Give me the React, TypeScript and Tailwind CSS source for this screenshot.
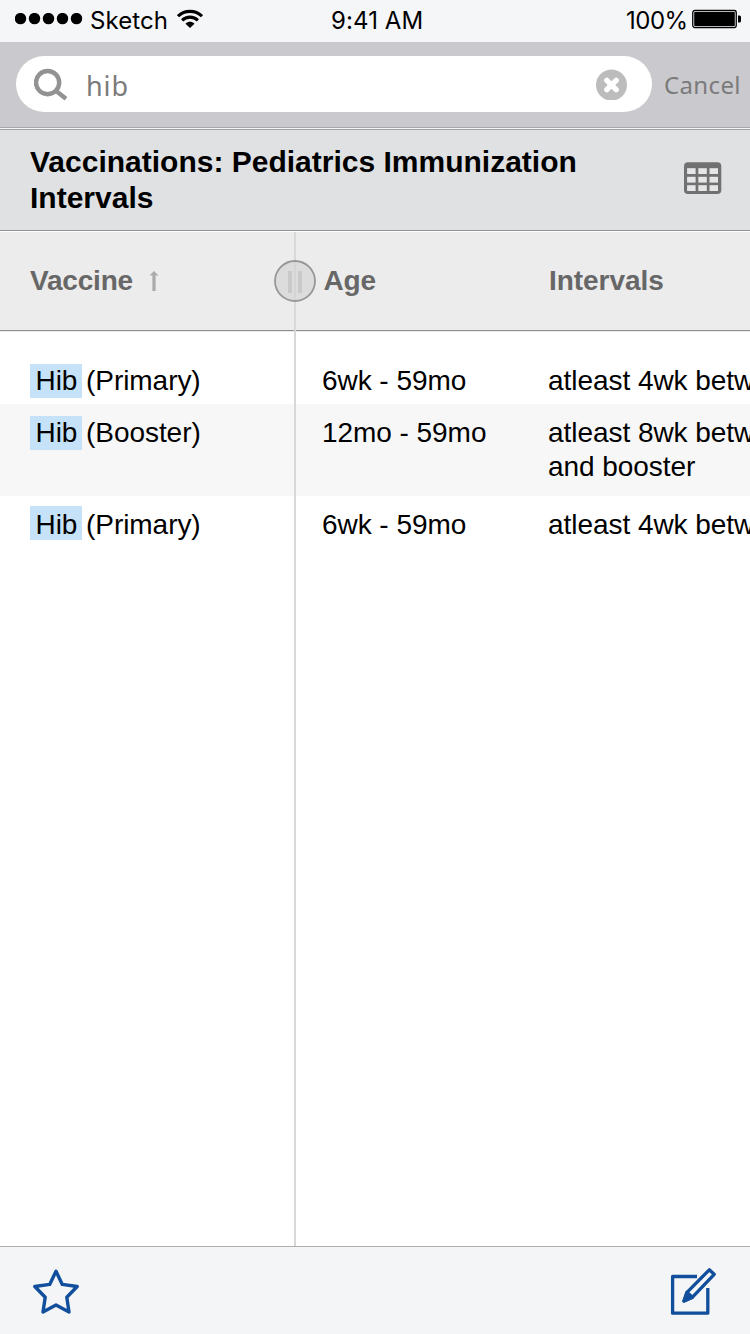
import React from "react";

const rows = [
  { kind: "(Primary)", age: "6wk - 59mo", intervals: ["atleast 4wk between"], style: "h-[72px] pt-8", markStyle: "" },
  { kind: "(Booster)", age: "12mo - 59mo", intervals: ["atleast 8wk between", "and booster"], style: "h-[92px] pt-3 bg-[#f7f7f7]", markStyle: "" },
  { kind: "(Primary)", age: "6wk - 59mo", intervals: ["atleast 4wk between"], style: "h-[56px] pt-3", markStyle: "-mt-0.5 pt-0.5" },
];

function StatusBar() {
  return (
    <div className="flex h-[42px] shrink-0 items-center bg-[#f5f6f8] font-['Inter',sans-serif] text-[24px] leading-[42px] text-black">
      <svg className="ml-[15px] h-3 w-[68px] -translate-y-[2px]" viewBox="0 0 68 12">
        {[5.5, 19.5, 33.5, 47.5, 61.5].map((x) => (
          <circle key={x} cx={x} cy="5.6" r="5.7" />
        ))}
      </svg>
      <span className="ml-[7px] w-[80px] whitespace-nowrap tracking-[0.1px]">Sketch</span>
      <svg className="ml-[7px] h-[20px] w-[26px] -translate-y-[2px]" viewBox="0 0 26 20" fill="none" stroke="#000" strokeWidth="3.1">
        <path d="M1 7.2C7.6 .8 18.4 .8 25 7.2" />
        <path d="M5.1 11.3C9.5 7.1 16.5 7.1 20.9 11.3" />
        <path d="M8.5 14.7C11.2 12.2 14.8 12.2 17.5 14.7L13 19Z" fill="#000" stroke="none" />
      </svg>
      <span className="ml-[128px] w-[110px] whitespace-nowrap tracking-[0.1px]">9:41 AM</span>
      <span className="ml-[185px] w-[61px] whitespace-nowrap tracking-[-0.5px]">100%</span>
      <svg className="ml-[5px] h-[19px] w-[50px] -translate-y-[2.5px]" viewBox="0 0 50 19">
        <rect x=".75" y=".75" width="43.5" height="17.5" rx="2.5" fill="none" stroke="#000" strokeWidth="1.3" />
        <rect x="2.2" y="2.2" width="40.6" height="14.6" rx="1" />
        <path d="M46 6h1.5q1.5 0 1.5 1.5v4q0 1.5-1.5 1.5H46z" />
      </svg>
    </div>
  );
}

function SearchBar() {
  return (
    <div className="flex h-[85px] shrink-0 items-start bg-[#cac9ce] pt-[14px] pl-4 font-['Noto_Sans',sans-serif] text-[#7b7b7b]">
      <div className="flex h-14 w-[636px] items-center rounded-full bg-white">
        <svg className="ml-[18px] h-[34px] w-[34px]" viewBox="0 0 34 34" fill="none" stroke="#929292" strokeWidth="4.4">
          <circle cx="13.6" cy="15.6" r="11.6" />
          <path d="M21.5 23.5L32 31.7" />
        </svg>
        <span className="ml-[18px] w-[80px] pt-[3px] text-[27px] leading-[56px] tracking-[0.9px]">hib</span>
        <svg className="ml-[430px] h-8 w-8 shrink-0" viewBox="0 0 32 32">
          <circle cx="15.5" cy="17" r="15.5" fill="#bcbcbc" />
          <path d="M10.8 12.3L20.2 21.7M20.2 12.3L10.8 21.7" stroke="#fff" strokeWidth="5.4" strokeLinecap="round" />
        </svg>
      </div>
      <span className="ml-3 whitespace-nowrap pt-px text-[24px] leading-[56px] tracking-[0.35px]">Cancel</span>
    </div>
  );
}

function TitleBar() {
  return (
    <div className="flex h-[101px] shrink-0 items-start justify-between border-b border-[#8f9093] bg-[#e0e1e3] pt-[14px] pr-[28px] pl-[30px]">
      <h1 className="w-[600px] whitespace-nowrap text-[30px] leading-9 font-bold text-black">
        Vaccinations: Pediatrics Immunization
        <br />
        Intervals
      </h1>
      <svg className="mt-[18px] h-8 w-[38px]" viewBox="0 0 38 32">
        <rect x="0" y="0.3" width="37.3" height="31.7" rx="4" fill="#717171" />
        {[6.2, 14.8, 23.2].map((y) =>
          [3.1, 14.3, 25.5].map((x) => <rect key={`${x}-${y}`} x={x} y={y} width="8.5" height="5.8" fill="#e6e6e8" />)
        )}
      </svg>
    </div>
  );
}

function Table() {
  return (
    <div className="relative flex grow flex-col overflow-hidden text-[28px] leading-[34px] tracking-[-0.05px] whitespace-nowrap text-black">
      <div className="flex h-[99px] shrink-0 border-b border-[#8f8f8f] bg-[#ececec] pt-8 font-bold text-[#676767]">
        <div className="flex w-[323.5px] shrink-0 pl-[30px]">
          <span className="w-[119px] tracking-[-0.2px]">Vaccine</span>
          <svg className="mt-[7px] h-5 w-[10px]" viewBox="0 0 10 20">
            <path d="M5 0L9.5 4.6H6.6V20H3.4V4.6H.5Z" fill="#aaa" />
          </svg>
        </div>
        <span className="w-[225.5px] shrink-0 tracking-[-0.2px]">Age</span>
        <span>Intervals</span>
      </div>
      <div className="h-px shrink-0 bg-[#ebebeb]" />
      {rows.map((row, i) => (
        <div key={i} className={`flex shrink-0 ${row.style}`}>
          <div className="flex w-[322px] shrink-0 items-start pl-[30px]">
            <mark className={`mr-1 h-[34px] w-[52px] bg-[#c5e2f8] pl-[5.5px] text-black ${row.markStyle}`}>Hib</mark>
            <span>{row.kind}</span>
          </div>
          <span className="w-[226px] shrink-0">{row.age}</span>
          <div>
            {row.intervals.map((line) => (
              <div key={line}>{line}</div>
            ))}
          </div>
        </div>
      ))}
      <div className="absolute inset-y-0 left-[294px] w-[2px] bg-[#d8d8d8]" />
      <svg className="absolute top-7 left-[274px] h-[42px] w-[42px]" viewBox="0 0 42 42">
        <circle cx="21" cy="21" r="20" fill="#dcdcdc" stroke="#979797" strokeWidth="1.8" />
        <path d="M20 2h2v38h-2z" fill="#d5d5d5" />
        <path d="M14 11h4v22h-4zM24 11h4v22h-4z" fill="#c9c9c9" />
      </svg>
    </div>
  );
}

function Toolbar() {
  return (
    <div className="flex h-[88px] shrink-0 items-start justify-between border-t border-[#adafb1] bg-[#f4f5f7] pr-[33px] pl-[32px]">
      <svg className="mt-[22px] h-[48px] w-[48px]" viewBox="0 0 48 48" fill="none" stroke="#114e9b" strokeWidth="3.4" strokeLinejoin="round">
        <path d="M24 2.2L30.3 15.4L45.2 17.5L34.8 28.2L37 43L24 36L11 43L13.2 28.2L2.8 17.5L17.7 15.4Z" />
      </svg>
      <svg className="mt-[20px] h-[50px] w-[47px]" viewBox="0 0 47 50" fill="none" stroke="#114e9b" strokeWidth="3.3" strokeLinejoin="round">
        <path d="M27 9.5H2.6V46.2H37.8V21" />
        <path d="M39.3 2.8L44.2 7.3L22.5 30.2L14 34L17 25.4Z" />
        <path d="M17 25.4L22.5 30.2L14 34Z" fill="#114e9b" />
      </svg>
    </div>
  );
}

export default function App() {
  return (
    <div className="flex h-[1334px] w-[750px] flex-col overflow-hidden bg-white font-['Liberation_Sans',Arial,sans-serif]">
      <StatusBar />
      <SearchBar />
      <div className="h-px shrink-0 bg-[#a9a9ac]" />
      <div className="h-px shrink-0 bg-[#f4f4f4]" />
      <div className="h-px shrink-0 bg-[#a0a1a3]" />
      <TitleBar />
      <div className="h-px shrink-0 bg-white" />
      <Table />
      <Toolbar />
    </div>
  );
}
